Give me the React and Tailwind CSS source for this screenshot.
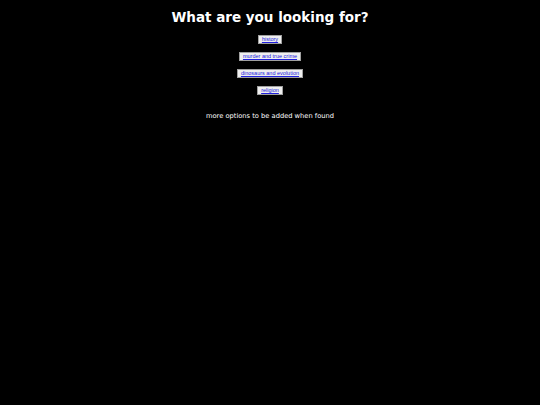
export default function App() {
  const items = ["history", "murder and true crime", "dinosaurs and evolution", "religion"];
  return (
    <div className="min-h-[405px] w-full bg-black text-white flex flex-col items-center" style={{ fontFamily: '"DejaVu Sans", sans-serif' }}>
      <h1 className="mt-[9px] text-[13.5px] leading-[17px] font-bold">What are you looking for?</h1>
      <div className="mt-[9px] flex flex-col items-center gap-[8px]">
        {items.map((t) => (
          <button key={t} className="h-[9px] px-[3px] bg-[#efefef] border border-[#a0a0a0] flex items-center">
            <a href="#" className="text-[5.5px] leading-[7px] text-[#2020dd] underline" style={{ fontFamily: '"Liberation Sans", Arial, sans-serif' }}>{t}</a>
          </button>
        ))}
      </div>
      <p className="mt-[17px] text-[6.7px] leading-[9px]">more options to be added when found</p>
    </div>
  );
}
